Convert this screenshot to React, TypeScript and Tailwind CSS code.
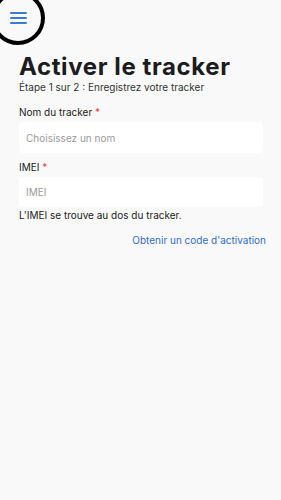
import { useState } from "react";

const FONT = { fontFamily: "Inter, 'Noto Sans', sans-serif" };

export default function App() {
  const [name, setName] = useState("");
  const [imei, setImei] = useState("");

  return (
    <div className="min-h-[500px] w-full bg-[#f9f9f9] text-[#1c1c1e]" style={FONT}>
      {/* Top bar */}
      <div className="relative h-[53px]">
        <button className="absolute left-[10px] top-[12px] flex h-[12px] w-[17px] flex-col justify-between">
          <span className="h-[2px] w-full rounded-full bg-[#3a7bd5]" />
          <span className="h-[2px] w-full rounded-full bg-[#3a7bd5]" />
          <span className="h-[2px] w-full rounded-full bg-[#3a7bd5]" />
        </button>
        {/* touch indicator */}
        <div className="pointer-events-none absolute left-[-9px] top-[-9px] h-[54px] w-[54px] rounded-full border-[4px] border-black" />
      </div>

      <div className="px-[19px]">
        <h1 className="text-[24px] font-bold leading-[28px] tracking-[0.6px]">Activer le tracker</h1>
        <p className="text-[10px] leading-[13px] text-[#333]">Étape 1 sur 2 : Enregistrez votre tracker</p>

        <label className="mt-[12px] block text-[10px] leading-[13px] text-[#222]">
          Nom du tracker <span className="text-[#e5484d]">*</span>
        </label>
        <input
          value={name}
          onChange={(e) => setName(e.target.value)}
          placeholder="Choisissez un nom"
          className="mt-[3px] h-[31px] w-[244px] rounded-[4px] bg-white px-[7px] text-[10px] outline-none placeholder:text-[#9a9a9a]"
        />

        <label className="mt-[8px] block text-[10px] leading-[13px] text-[#222]">
          IMEI <span className="text-[#e5484d]">*</span>
        </label>
        <input
          value={imei}
          onChange={(e) => setImei(e.target.value)}
          placeholder="IMEI"
          className="mt-[3px] h-[30px] w-[244px] rounded-[4px] bg-white px-[7px] text-[10px] outline-none placeholder:text-[#9a9a9a]"
        />
        <p className="mt-[2px] text-[10px] leading-[13px] text-[#222]">L'IMEI se trouve au dos du tracker.</p>

        <div className="mt-[12px] flex justify-end">
          <button className="mr-[-4px] text-[10px] leading-[13px] text-[#2f6fc8]">Obtenir un code d'activation</button>
        </div>
      </div>
    </div>
  );
}
